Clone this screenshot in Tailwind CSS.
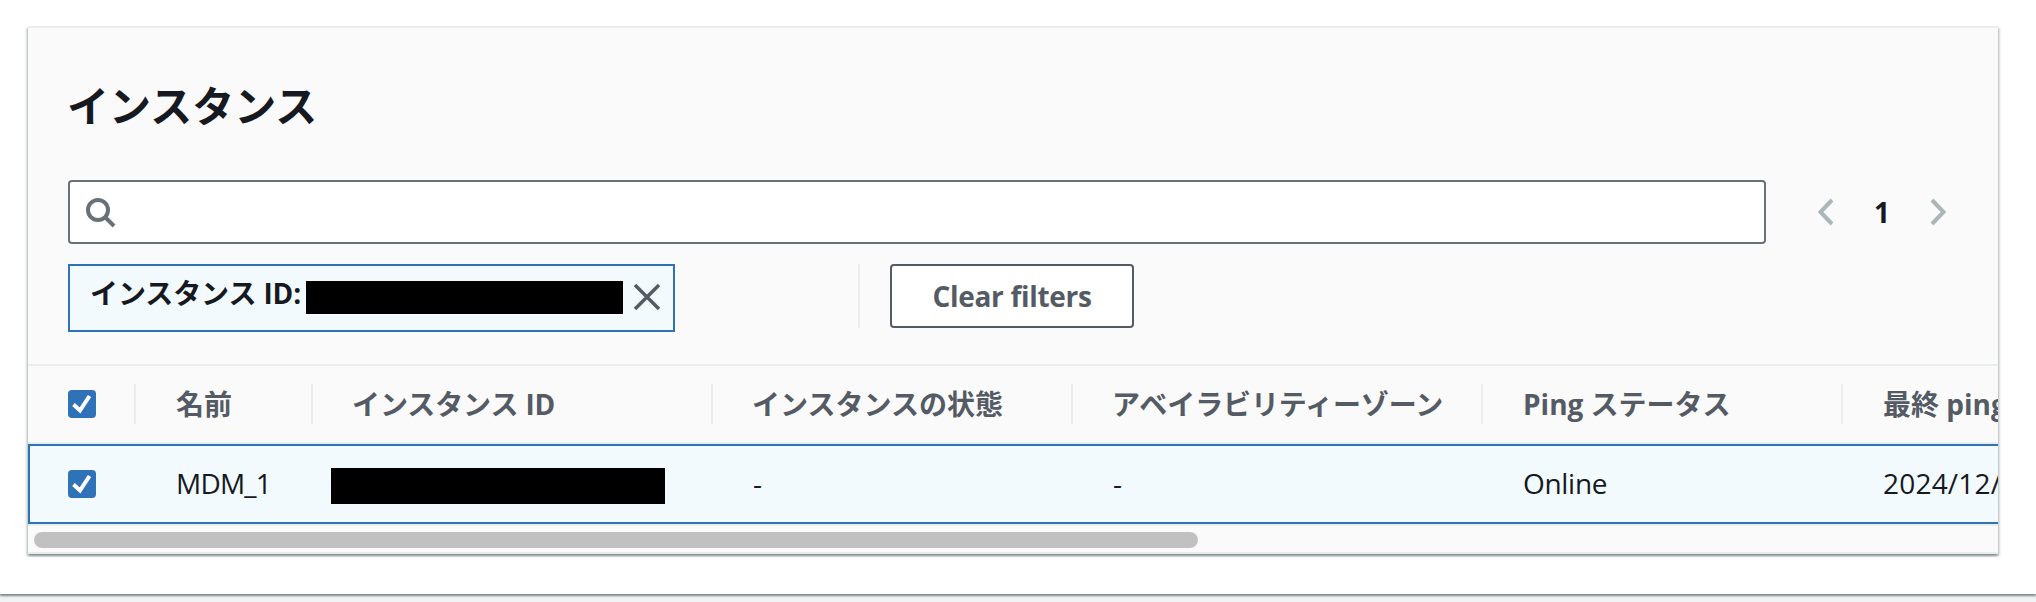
<!DOCTYPE html>
<html lang="ja">

<head>
  <meta charset="UTF-8" />
  <meta name="viewport" content="width=device-width, initial-scale=1.0" />
  <title>インスタンス</title>
  <script src="https://cdn.jsdelivr.net/npm/@tailwindcss/browser@4"></script>
</head>

<body class="h-[602px] overflow-hidden bg-[#f2f3f3] font-['Open_Sans','Noto_Sans_CJK_JP',sans-serif] text-[28px] leading-10 text-[#16191f]">
  <main class="h-[594px] bg-white pt-[26px] pl-7 pr-[38px] shadow-[0_2px_2px_0_rgba(0,28,36,0.5)]">
    <section class="h-[528px] bg-[#fafafa] border-y-2 border-[#eaeded] shadow-[0_2px_2px_0_rgba(0,28,36,0.3),2px_2px_2px_0_rgba(0,28,36,0.15),-2px_2px_2px_0_rgba(0,28,36,0.15)]">

      <!-- Title, search and filters -->
      <div class="h-[338px] border-b-2 border-[#eaeded] pl-10 pr-[50px] pt-12">
        <h2 class="h-[104px] -ml-px text-[42px] leading-[60px] font-bold">インスタンス</h2>

        <div class="flex items-center h-16">
          <div class="w-[1698px] h-16 shrink-0 flex items-center pl-[14px] bg-white border-2 border-[#687078] rounded">
            <svg class="size-8" viewBox="0 0 16 16" fill="none" stroke="#687078" stroke-width="2">
              <circle cx="7" cy="7" r="5" />
              <path d="m15 15-4.5-4.5" />
            </svg>
          </div>
          <div class="ml-[50px] w-[132px] flex items-center justify-between">
            <svg class="w-[18px] h-7" viewBox="0 0 18 28" fill="none" stroke="#aab7b8" stroke-width="4">
              <path d="M16 2 4.500 14 16 26" />
            </svg>
            <span class="font-bold">1</span>
            <svg class="w-[18px] h-7" viewBox="0 0 18 28" fill="none" stroke="#aab7b8" stroke-width="4">
              <path d="M2 2 13.500 14 2 26" />
            </svg>
          </div>
        </div>

        <div class="flex items-start mt-5">
          <div class="w-[607px] h-[68px] flex items-start pl-5 pt-[7px] bg-[#f2fafd] border-2 border-[#2f72b6]">
            <span class="w-[216px] whitespace-nowrap font-bold tracking-[-0.1px]">インスタンス ID:</span>
            <span class="w-[317px] h-[33px] mt-2 bg-black"></span>
            <svg class="size-7 ml-[10px] mt-[10px]" viewBox="0 0 28 28" fill="none" stroke="#545b64" stroke-width="3.500">
              <path d="m2 2 24 24M26 2 2 26" />
            </svg>
          </div>
          <div class="w-0.5 h-16 ml-[183px] bg-[#eaeded]"></div>
          <button class="w-[244px] h-16 ml-[30px] bg-white border-2 border-[#545b64] rounded font-bold tracking-[-0.3px] text-[#545b64]">Clear filters</button>
        </div>
      </div>

      <!-- Instance table -->
      <div class="overflow-hidden whitespace-nowrap">
        <div class="w-[2230px] h-[78px] grid grid-cols-[108px_177px_400px_360px_410px_360px_415px] items-center border-b-2 border-[#eaeded] font-bold text-[#545b64]">
          <div class="h-10 pl-10 flex items-center border-r-2 border-[#eaeded]">
            <svg class="size-7 rounded bg-[#3072b7]" viewBox="0 0 28 28" fill="none" stroke="#fff" stroke-width="4">
              <path d="m5.500 14.500 6.500 6L21.500 6" />
            </svg>
          </div>
          <div class="h-10 pl-10 border-r-2 border-[#eaeded]">名前</div>
          <div class="h-10 pl-[39px] border-r-2 border-[#eaeded] tracking-[-0.1px]">インスタンス ID</div>
          <div class="h-10 pl-[39px] border-r-2 border-[#eaeded]">インスタンスの状態</div>
          <div class="h-10 pl-[39px] border-r-2 border-[#eaeded] tracking-[-0.1px]">アベイラビリティーゾーン</div>
          <div class="h-10 pl-10 border-r-2 border-[#eaeded]">Ping ステータス</div>
          <div class="h-10 pl-10">最終 ping</div>
        </div>
        <div class="w-[2230px] h-20 grid grid-cols-[106px_177px_400px_360px_410px_360px_413px] items-center bg-[#f2fafd] border-2 border-[#2f72b6] font-medium">
          <div class="pl-[38px]">
            <svg class="size-7 rounded bg-[#3072b7]" viewBox="0 0 28 28" fill="none" stroke="#fff" stroke-width="4">
              <path d="m5.500 14.500 6.500 6L21.500 6" />
            </svg>
          </div>
          <div class="pl-10 pb-0.5 tracking-[-0.8px]">MDM_1</div>
          <div class="pl-[18px]">
            <div class="w-[334px] h-9 mt-1 bg-black"></div>
          </div>
          <div class="pl-10 pb-0.5">-</div>
          <div class="pl-10 pb-0.5">-</div>
          <div class="pl-10 pb-0.5 tracking-[-0.3px]">Online</div>
          <div class="pl-10 pb-0.5 tracking-[0.2px]">2024/12/</div>
        </div>
        <!-- Scrollbar -->
        <div class="h-7 pt-1.5 pl-1.5 border-t-2 border-[#eaeded]">
          <div class="w-[1164px] h-4 rounded-full bg-[#c1c1c1]"></div>
        </div>
      </div>
    </section>
  </main>
</body>

</html>
